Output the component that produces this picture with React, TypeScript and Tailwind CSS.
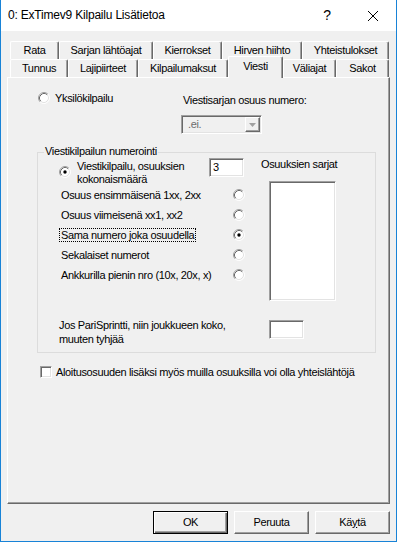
import React from 'react';

const sunken =
  'border border-t-[#a0a0a0] border-l-[#a0a0a0] border-r-white border-b-white shadow-[inset_1px_1px_0_#696969,inset_-1px_-1px_0_#e3e3e3]';
const raised =
  'border border-t-white border-l-white border-r-[#696969] border-b-[#696969] shadow-[inset_-1px_-1px_0_#a0a0a0]';

const backTabs = [
  { label: 'Rata', w: 'w-[49px]' },
  { label: 'Sarjan lähtöajat', w: 'w-[94px]' },
  { label: 'Kierrokset', w: 'w-[69px]' },
  { label: 'Hirven hiihto', w: 'w-[80px]' },
  { label: 'Yhteistulokset', w: 'w-[87px]' },
];

const frontTabs = [
  { label: 'Tunnus', w: 'w-[58px]' },
  { label: 'Lajipiirteet', w: 'w-[70px]' },
  { label: 'Kilpailumaksut', w: 'w-[90px]' },
  { label: 'Viesti', w: 'w-[55px]', active: true },
  { label: 'Väliajat', w: 'w-[53px]' },
  { label: 'Sakot', w: 'w-[53px]' },
];

const options = [
  { label: 'Osuus ensimmäisenä 1xx, 2xx' },
  { label: 'Osuus viimeisenä xx1, xx2' },
  { label: 'Sama numero joka osuudella', checked: true },
  { label: 'Sekalaiset numerot' },
  { label: 'Ankkurilla pienin nro (10x, 20x, x)' },
];

function Radio({ checked = false }: { checked?: boolean }) {
  return (
    <svg width="12" height="12" viewBox="0 0 12 12" className="shrink-0">
      <circle cx="6" cy="6" r="5" fill="#fff" />
      <path d="M2.11 9.89 A5.5 5.5 0 0 1 9.89 2.11" fill="none" stroke="#a0a0a0" />
      <path d="M9.89 2.11 A5.5 5.5 0 0 1 2.11 9.89" fill="none" stroke="#fff" />
      <path d="M2.82 9.18 A4.5 4.5 0 0 1 9.18 2.82" fill="none" stroke="#696969" />
      <path d="M9.18 2.82 A4.5 4.5 0 0 1 2.82 9.18" fill="none" stroke="#e3e3e3" />
      {checked && <circle cx="6" cy="6" r="1.7" fill="#000" />}
    </svg>
  );
}

function Tab({ label, w, active }: { label: string; w: string; active?: boolean }) {
  return (
    <div
      className={`${w} shrink-0 flex items-center justify-center whitespace-nowrap bg-[#f0f0f0] border-t border-l border-white border-r border-r-[#696969] shadow-[inset_-1px_0_0_#a0a0a0] rounded-t-[2px] ${
        active ? 'h-[22px] -mb-[1px] pb-[3px] relative z-10' : 'h-[18px]'
      }`}
    >
      {label}
    </div>
  );
}

export default function App() {
  return (
    <div className="w-[397px] h-[542px] bg-[#f0f0f0] border-x border-b border-[#1883d7] flex flex-col overflow-hidden text-black text-[11px] leading-[13px] tracking-[-0.35px] font-['Liberation_Sans',Arial,sans-serif]">
      {/* title bar */}
      <div className="h-[31px] shrink-0 bg-white flex items-center">
        <span className="pl-[7px] text-[12px] tracking-[-0.2px]">0: ExTimev9 Kilpailu Lisätietoa</span>
        <div className="ml-auto flex h-full">
          <div className="w-[46px] flex items-center justify-center text-[14px]">?</div>
          <div className="w-[46px] flex items-center justify-center">
            <svg width="10" height="10" viewBox="0 0 10 10">
              <path d="M0 0 L10 10 M10 0 L0 10" stroke="#000" strokeWidth="1" />
            </svg>
          </div>
        </div>
      </div>

      <div className="px-[6px] flex flex-col">
        {/* tabs */}
        <div className="pt-[10px] pl-[3px]">
          <div className="flex">
            {backTabs.map(t => (
              <Tab key={t.label} label={t.label} w={t.w} />
            ))}
          </div>
          <div className="flex items-end h-[18px]">
            {frontTabs.map(t => (
              <Tab key={t.label} label={t.label} w={t.w} active={t.active} />
            ))}
          </div>
        </div>

        {/* panel */}
        <div className={`h-[427px] flex flex-col ${raised}`}>
          <div className="flex">
            <div className="w-[173px] pl-[30px] pt-[14px]">
              <div className="flex items-center gap-[5px] h-[12px]">
                <Radio />
                <span>Yksilökilpailu</span>
              </div>
            </div>
            <div className="pt-[16px]">
              <div className="pl-[2px]">Viestisarjan osuus numero:</div>
              <div className={`mt-[8px] w-[81px] h-[19px] flex items-center ${sunken}`}>
                <span className="pl-[6px] text-[#6d6d6d] flex-1">.ei.</span>
                <div className={`w-[15px] h-[15px] mr-[1px] flex items-center justify-center ${raised}`}>
                  <svg width="7" height="4" viewBox="0 0 7 4">
                    <path d="M0 0 H7 L3.5 4 Z" fill="#a0a0a0" />
                  </svg>
                </div>
              </div>
            </div>
          </div>

          {/* group box */}
          <div className="mt-[18px] ml-[29px] mr-[13px] border border-[#dcdcdc] pb-[6px]">
            <span className="block w-fit -mt-[8px] ml-[6px] px-[1px] bg-[#f0f0f0] leading-[13px]">
              Viestikilpailun numerointi
            </span>
            <div className="flex">
              <div className="w-[223px]">
                <div className="flex items-start h-[28px]">
                  <div className="ml-[21px] mt-[8px]">
                    <Radio checked />
                  </div>
                  <div className="ml-[6px] w-[132px] mt-[2px]">
                    Viestikilpailu, osuuksien
                    <br />
                    kokonaismäärä
                  </div>
                  <div className={`w-[35px] h-[19px] bg-white flex items-center pl-[3px] ${sunken}`}>3</div>
                </div>
                <div className="-mt-[1px]">
                  {options.map(o => (
                    <div key={o.label} className="flex items-center h-[20px] pl-[23px]">
                      <span className="w-[172px] whitespace-nowrap">
                        <span
                          className={
                            o.checked ? 'outline-1 outline-dotted outline-black px-[1px] -mx-[1px]' : ''
                          }
                        >
                          {o.label}
                        </span>
                      </span>
                      <Radio checked={o.checked} />
                    </div>
                  ))}
                </div>
              </div>
              <div>
                <div>Osuuksien sarjat</div>
                <div className={`ml-[8px] mt-[10px] w-[67px] h-[120px] bg-white ${sunken}`} />
              </div>
            </div>
            <div className="flex mt-[17px]">
              <div className="w-[223px] pl-[21px] leading-[14px]">
                Jos PariSprintti, niin joukkueen koko,
                <br />
                muuten tyhjää
              </div>
              <div className={`ml-[8px] mt-[2px] w-[35px] h-[19px] bg-white ${sunken}`} />
            </div>
          </div>

          <div className="flex items-center mt-[13px] ml-[32px] h-[12px]">
            <div className={`w-[12px] h-[12px] bg-white ${sunken}`} />
            <span className="ml-[4px]">Aloitusosuuden lisäksi myös muilla osuuksilla voi olla yhteislähtöjä</span>
          </div>
        </div>

        {/* buttons */}
        <div className="flex justify-end gap-[6px] mt-[7px]">
          <button className="w-[75px] h-[23px] bg-[#f0f0f0] border border-black shadow-[inset_1px_1px_0_#fff,inset_-1px_-1px_0_#696969,inset_-2px_-2px_0_#a0a0a0]">
            OK
          </button>
          <button className={`w-[75px] h-[23px] bg-[#f0f0f0] ${raised}`}>Peruuta</button>
          <button className={`w-[75px] h-[23px] bg-[#f0f0f0] ${raised}`}>
            Kä<span className="underline">y</span>tä
          </button>
        </div>
      </div>
    </div>
  );
}
